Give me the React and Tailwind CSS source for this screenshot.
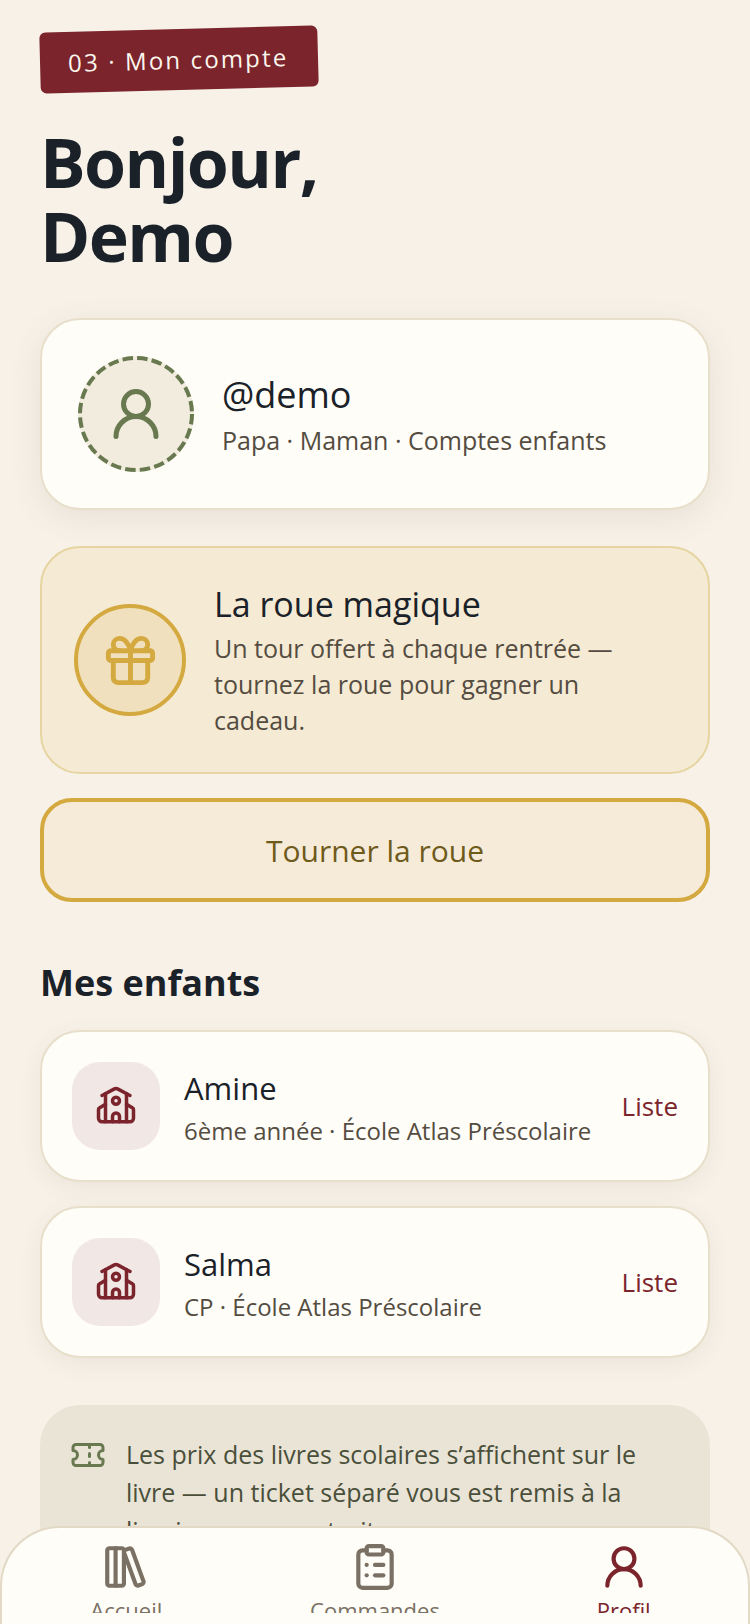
import React from "react";
import { ClipboardList, Gift, LibraryBig, School, Ticket, UserRound } from "lucide-react";

const children = [
  { name: "Amine", detail: "6ème année · École Atlas Préscolaire" },
  { name: "Salma", detail: "CP · École Atlas Préscolaire" },
];

const tabs = [
  { label: "Accueil", Icon: LibraryBig, color: "text-[#7a7063]" },
  { label: "Commandes", Icon: ClipboardList, color: "text-[#7a7063]" },
  { label: "Profil", Icon: UserRound, color: "text-[#7b242c]" },
];

const App = () => {
  return (
    <div className="relative h-[1624px] w-[750px] overflow-hidden bg-[#f7f1e8] font-['Open_Sans',sans-serif] text-[#1a2128]">
      <main className="px-10 pt-[29px]">
        <div className="flex h-[61px] w-[278px] -rotate-[1.5deg] items-center rounded-md bg-[#7b242c] pl-7 text-[24px] tracking-[2.15px] text-[#fdf6ec]">
          03 · Mon compte
        </div>

        <h1 className="mt-[35px] text-[68px] leading-[74px] font-bold tracking-[-1.6px]">
          Bonjour,
          <br />
          Demo
        </h1>

        {/* Profil */}
        <section className="mt-[45px] flex h-[192px] items-center gap-7 rounded-[40px] border-2 border-[#e8dfcb] bg-[#fffdf8] pl-[36px] shadow-[0_8px_32px_rgba(120,90,50,0.1)]">
          <div className="relative flex h-[116px] w-[116px] items-center justify-center rounded-full bg-[#f2ecdf] text-[#68794f]">
            <svg viewBox="0 0 116 116" className="absolute inset-0 h-full w-full" fill="none">
              <circle cx="58" cy="58" r="56" stroke="#68794f" strokeWidth="4" strokeDasharray="10.5 4.2" />
            </svg>
            <UserRound size={60} />
          </div>
          <div>
            <p className="text-[36px] leading-[46px]">@demo</p>
            <p className="mt-[5px] text-[25px] leading-[34px] text-[#544c41]">Papa · Maman · Comptes enfants</p>
          </div>
        </section>

        {/* Roue */}
        <section className="mt-[36px] flex h-[228px] items-center gap-7 rounded-[40px] border-2 border-[#e6d5a0] bg-[#f5ead4] pl-[32px]">
          <div className="flex h-[112px] w-[112px] shrink-0 items-center justify-center rounded-full border-4 border-[#d4a93f] bg-[#f1e0bd] text-[#d4a93f]">
            <Gift size={59} />
          </div>
          <div className="pr-[60px]">
            <p className="text-[34px] leading-[44px]">La roue magique</p>
            <p className="mt-1 text-[25px] leading-[36px] text-[#544c41]">
              Un tour offert à chaque rentrée — tournez la roue pour gagner un cadeau.
            </p>
          </div>
        </section>

        <button className="mt-[24px] flex h-[104px] w-full items-center justify-center rounded-[32px] border-4 border-[#d4a93f] bg-[#f6ebd9] text-[30px] text-[#6e5a1a]">
          Tourner la roue
        </button>

        <h2 className="mt-[56px] text-[36px] leading-[50px] font-bold">Mes enfants</h2>

        <div className="mt-[22px] flex flex-col gap-[24px]">
          {children.map((child) => (
            <div
              key={child.name}
              className="flex h-[152px] items-center rounded-[40px] border-2 border-[#e8dfcb] bg-[#fffdf8] px-[30px] shadow-[0_6px_22px_rgba(120,90,50,0.08)]"
            >
              <div className="flex h-[88px] w-[88px] shrink-0 items-center justify-center rounded-[28px] bg-[#f1e8e6] text-[#7b242c]">
                <School size={42} />
              </div>
              <div className="ml-6 flex-1 pt-[2px]">
                <p className="text-[31px] leading-[44px]">{child.name}</p>
                <p className="mt-[4px] text-[24px] leading-[34px] text-[#544c41]">{child.detail}</p>
              </div>
              <span className="text-[26px] text-[#7b242c]">Liste</span>
            </div>
          ))}
        </div>

        {/* Note prix */}
        <section className="mt-[47px] flex h-[300px] gap-[20px] rounded-[40px] bg-[#e9e4d6] px-[30px] pt-[30px]">
          <Ticket size={36} className="mt-[2px] shrink-0 text-[#68794f]" />
          <p className="text-[25px] leading-[38px] text-[#4a4f3a]">
            Les prix des livres scolaires s’affichent sur le livre — un ticket séparé vous est remis à la livraison ou au retrait.
          </p>
        </section>
      </main>

      <nav className="absolute inset-x-0 bottom-0 h-[98px] rounded-t-[60px] border-2 border-b-0 border-[#e2d9c6] bg-[#fffdf8]">
        <div className="grid h-[85px] grid-cols-3 overflow-hidden pt-[14px]">
          {tabs.map(({ label, Icon, color }) => (
            <div key={label} className={`flex flex-col items-center ${color}`}>
              <Icon size={50} />
              <span className="mt-px text-[22px] leading-[34px]">{label}</span>
            </div>
          ))}
        </div>
      </nav>
    </div>
  );
};

export default App;
